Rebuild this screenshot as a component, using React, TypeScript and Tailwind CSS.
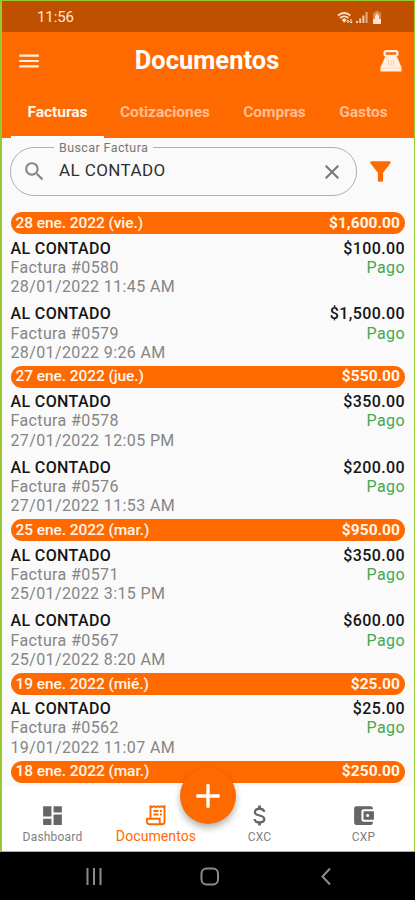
import {
  MdAccountBalanceWallet,
  MdAdd,
  MdClose,
  MdDashboard,
  MdFilterAlt,
  MdMenu,
  MdSearch,
} from "react-icons/md";

type Invoice = { id: string; date: string; amount: string };
type Group = { day: string; total: string; invoices: Invoice[] };

const groups: Group[] = [
  {
    day: "28 ene. 2022 (vie.)",
    total: "$1,600.00",
    invoices: [
      { id: "0580", date: "28/01/2022 11:45 AM", amount: "$100.00" },
      { id: "0579", date: "28/01/2022 9:26 AM", amount: "$1,500.00" },
    ],
  },
  {
    day: "27 ene. 2022 (jue.)",
    total: "$550.00",
    invoices: [
      { id: "0578", date: "27/01/2022 12:05 PM", amount: "$350.00" },
      { id: "0576", date: "27/01/2022 11:53 AM", amount: "$200.00" },
    ],
  },
  {
    day: "25 ene. 2022 (mar.)",
    total: "$950.00",
    invoices: [
      { id: "0571", date: "25/01/2022 3:15 PM", amount: "$350.00" },
      { id: "0567", date: "25/01/2022 8:20 AM", amount: "$600.00" },
    ],
  },
  {
    day: "19 ene. 2022 (mié.)",
    total: "$25.00",
    invoices: [{ id: "0562", date: "19/01/2022 11:07 AM", amount: "$25.00" }],
  },
  { day: "18 ene. 2022 (mar.)", total: "$250.00", invoices: [] },
];

const RegisterIcon = () => (
  <svg className="w-[22px] h-[22px]" viewBox="0 0 22 22" fill="none">
    <rect x="4.500" y="1.200" width="13" height="4.600" rx="2" stroke="currentColor" strokeWidth="2.200" />
    <path d="M6 6.500h10l1.500 1.500L21.500 17.500V21.500H.5v-4L4.500 8z" fill="currentColor" />
    <path d="M8.500 10v5.500M11 10v5.500M13.500 10v5.500" stroke="#ffc9a3" strokeWidth="1" />
    <path d="M1.500 18h19" stroke="#ffc9a3" strokeWidth=".6" />
  </svg>
);

const ReceiptIcon = () => (
  <svg className="w-[24px] h-[24px]" viewBox="0 0 24 24" fill="none" stroke="currentColor" strokeWidth="1.900">
    <path d="M6.500 15.500V3.300l1.800.6 1.800-.6 1.900.6 1.900-.6 1.800.6 1.800-.6 1.800.6 1.200-.6V19q0 2.200-2.200 2.200H5.500q-2.500 0-2.500-2.500v-2.900h12.700v3q0 2.200 1.800 2.200" />
    <path d="M9.500 8h5M9.500 11.500h5M16 8h1.800M16 11.500h1.800" />
  </svg>
);

const DollarIcon = () => (
  <svg className="w-[25px] h-[25px] text-[#666]" viewBox="0 0 24 24" fill="none" stroke="currentColor" strokeWidth="2.200">
    <path d="M16.500 8.500Q16 5.500 12 5.500T7.500 8.600Q7.500 11 12 12t4.600 3.500Q16.600 18.500 12 18.500T7.300 15.300" />
    <path d="M12 2.500v3M12 18.500v3" strokeWidth="2.600" />
  </svg>
);

const StatusBar = () => (
  <div className="h-[32px] shrink-0 bg-[#bf5000] flex items-center justify-between pl-[35px] pr-[32px] pt-[3px] text-[#ffe3d0]">
    <span className="text-[15px] leading-none tracking-[-0.1px]">11:56</span>
    <div className="flex items-center gap-[3px]">
      <svg className="w-[16px] h-[14px]" viewBox="0 0 16 14" fill="none" stroke="currentColor">
        <path d="M1 4.500Q7.200-.5 13.400 4.500M3 7Q7.200 3.600 11.400 7" strokeWidth="1.700" />
        <path d="M4.800 8.600Q7.200 6.600 9.600 8.600L7.200 12z" fill="currentColor" stroke="none" />
        <path d="M11 12V9.200M9.600 10.600L11 9.200l1.200 1.400M14 8v4M12.800 10.600L14 12l1.200-1.400" strokeWidth="1" />
      </svg>
      <svg className="w-[12px] h-[13px]" viewBox="0 0 12 13" fill="currentColor" opacity=".85">
        <path d="M0 10h2v2H0zM3.200 7.500h2V12h-2zM6.400 4.500h2V12h-2z" />
        <path d="M9.600 1h2v11h-2z" opacity=".75" />
      </svg>
      <svg className="w-[10px] h-[14px] ml-px" viewBox="0 0 10 14" fill="currentColor">
        <path d="M3.200 0h3.600v1.400h1.400Q9 1.400 9 2.400V12q0 1-1 1H2q-1 0-1-1V2.400q0-1 1-1h1.200z" opacity=".4" />
        <path d="M5 2.200L7 5v3h2v4q0 1-1 1H2q-1 0-1-1V8h2V5z" />
      </svg>
    </div>
  </div>
);

const Header = () => (
  <header className="h-[105.5px] shrink-0 bg-[#ff6a00] text-[#fff0e4] flex flex-col">
    <div className="h-[56px] flex items-center pl-[14px] pr-[12px] pt-px">
      <MdMenu className="w-[26px] h-[26px]" />
      <h1 className="flex-1 text-center text-[25.5px] font-bold leading-none text-white pr-[8px]">
        Documentos
      </h1>
      <RegisterIcon />
    </div>
    <nav className="flex-1 flex pl-[9px] text-[15.5px] font-bold tracking-[-0.03px] text-[#ffbf94]">
      <span className="w-[93px] pt-[2px] flex items-center justify-center border-b-[2.5px] border-white text-[#fff6ee]">
        Facturas
      </span>
      <span className="w-[122px] pt-[2px] flex items-center justify-center border-b-[2.5px] border-transparent">
        Cotizaciones
      </span>
      <span className="w-[97px] pt-[2px] flex items-center justify-center border-b-[2.5px] border-transparent">
        Compras
      </span>
      <span className="w-[81px] pt-[2px] flex items-center justify-center border-b-[2.5px] border-transparent">
        Gastos
      </span>
    </nav>
  </header>
);

const SearchBar = () => (
  <div className="h-[74.5px] shrink-0 flex items-start pt-[9.5px] pl-[8px]">
    <div className="relative w-[347px] h-[49px] rounded-[24px] border border-[#b0b0b0] flex items-center pl-[11px] pr-[12px]">
      <span className="absolute left-[43px] -top-[8px] px-[5px] bg-[#fafafa] text-[12.5px] leading-[16px] tracking-[0.4px] text-[#777]">
        Buscar Factura
      </span>
      <MdSearch className="w-[25px] h-[25px] text-[#858585]" />
      <span className="flex-1 pl-[12px] pb-[2px] text-[17px] tracking-[0.4px] text-[#303030]">
        AL CONTADO
      </span>
      <MdClose className="w-[24px] h-[24px] text-[#777]" />
    </div>
    <MdFilterAlt className="w-[31px] h-[31px] mt-[9px] ml-[8px] text-[#ff6a00]" />
  </div>
);

const InvoiceRow = ({ id, date, amount }: Invoice) => (
  <div className="h-[65.8px] pt-[4.5px] flex justify-between text-[16px] leading-[19.2px] text-[#858585]">
    <div className="tracking-[0.38px]">
      <div className="font-medium text-[#151515]">AL CONTADO</div>
      <div>Factura #{id}</div>
      <div>{date}</div>
    </div>
    <div className="text-right tracking-[0.4px]">
      <div className="font-medium text-[#151515]">{amount}</div>
      <div className="text-[#43a852]">Pago</div>
    </div>
  </div>
);

const InvoiceList = () => (
  <main className="flex-1 min-h-0 overflow-hidden pl-[8.5px] pr-[9px]">
    {groups.map((group) => (
      <section key={group.day}>
        <div className="h-[22px] rounded-full bg-[#ff6a00] text-[#fff6ee] flex items-center justify-between pl-[5px] pr-[5px] pt-px">
          <span className="text-[15.5px] font-medium tracking-[-0.08px]">{group.day}</span>
          <span className="text-[15.5px] font-bold tracking-[0.05px]">{group.total}</span>
        </div>
        {group.invoices.map((invoice) => (
          <InvoiceRow key={invoice.id} {...invoice} />
        ))}
      </section>
    ))}
  </main>
);

const BottomNav = () => (
  <nav className="relative h-[65px] shrink-0 bg-white grid grid-cols-4 text-[12px] leading-[14px] tracking-[0.2px] text-[#808080]">
    <div className="flex flex-col items-center pt-[16px] pr-[2px]">
      <MdDashboard className="w-[25px] h-[25px] text-[#666]" />
      <span className="mt-[2px]">Dashboard</span>
    </div>
    <div className="flex flex-col items-center pt-[16px] pr-px text-[#ff6a00]">
      <ReceiptIcon />
      <span className="mt-[2px] text-[14px] tracking-[0.1px]">Documentos</span>
    </div>
    <div className="flex flex-col items-center pt-[16px]">
      <DollarIcon />
      <span className="mt-[2px]">CXC</span>
    </div>
    <div className="flex flex-col items-center pt-[16px] pl-[2px]">
      <MdAccountBalanceWallet className="w-[25px] h-[25px] text-[#666]" />
      <span className="mt-[2px]">CXP</span>
    </div>
    <button className="absolute left-[178px] -top-[19px] w-[56px] h-[56px] rounded-full bg-[#ff6a00] text-white shadow-[0_4px_7px_rgba(0,0,0,0.3)] flex items-center justify-center">
      <MdAdd className="w-[40px] h-[40px]" />
    </button>
  </nav>
);

const SystemNav = () => (
  <div className="h-[48px] shrink-0 bg-black text-[#8b8b8b]">
    <svg className="w-full h-full" viewBox="0 0 415 48" fill="none" stroke="currentColor" strokeWidth="2">
      <path d="M87.500 16v17M94 16v17M100.500 16v17" />
      <rect x="201.500" y="16.500" width="16.500" height="16" rx="5" />
      <path d="M330 16.500L322.500 24.500L330 32.500" />
    </svg>
  </div>
);

export default function App() {
  return (
    <div className="w-[415px] h-[900px] overflow-hidden bg-black flex flex-col font-[Roboto,sans-serif]">
      <div className="relative h-[852px] flex flex-col bg-[#fafafa] pl-[2px] pr-px">
        <StatusBar />
        <Header />
        <SearchBar />
        <InvoiceList />
        <BottomNav />
        <div className="absolute inset-0 pointer-events-none border-t-[1.5px] border-l-2 border-r border-b border-[#9ac832]" />
      </div>
      <SystemNav />
    </div>
  );
}
